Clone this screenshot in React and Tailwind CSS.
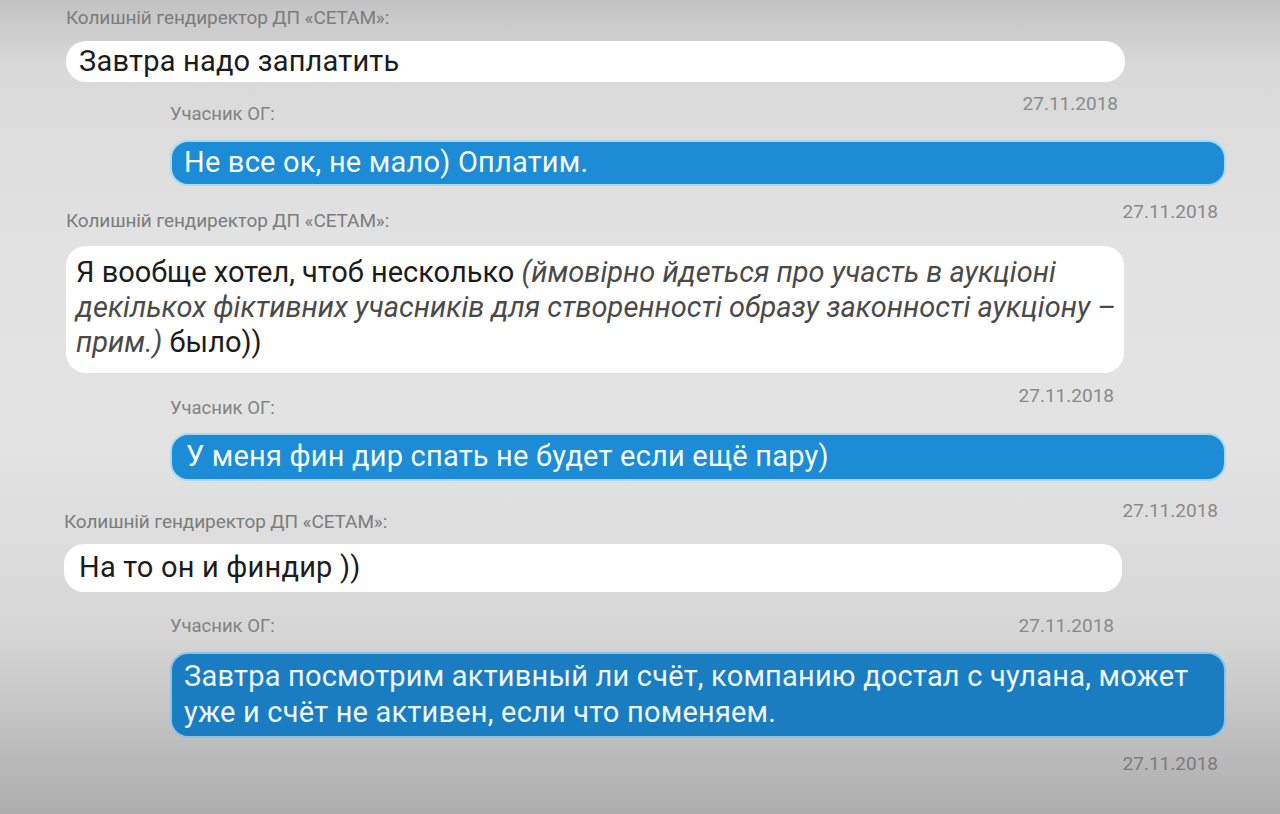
import React from "react";

const font = { fontFamily: "Roboto, 'Noto Sans', sans-serif" };

export default function App() {
  return (
    <div
      className="w-[1280px] h-[814px] overflow-hidden bg-[linear-gradient(to_bottom,#c2c2c2_0%,#d9d9d9_8%,#e2e2e2_30%,#e3e3e3_55%,#d6d6d6_78%,#adadad_100%)]"
      style={font}
    >
      <div className="flex flex-col pt-[7px]">
        {/* header 1 */}
        <div className="ml-[66px] h-[22px] leading-[22px] text-[19px] text-[#7c7c7c] tracking-[-0.1px]">
          Колишній гендиректор ДП «СЕТАМ»:
        </div>
        {/* bubble 1 */}
        <div className="ml-[66px] mt-[12px] w-[1059px] h-[41px] rounded-[20px] bg-white pl-[13px] flex items-center text-[29px] text-[#1c1c1c] tracking-[0.2px]">
          Завтра надо заплатить
        </div>
        {/* row 2 */}
        <div className="ml-[170px] w-[948px] h-[58px] flex justify-between items-start">
          <span className="mt-[21px] leading-[22px] text-[18.5px] text-[#828282]">Учасник ОГ:</span>
          <span className="mt-[11px] leading-[22px] text-[19px] text-[#8a8a8a]">27.11.2018</span>
        </div>
        {/* bubble 2 */}
        <div className="ml-[170px] w-[1056px] h-[46px] rounded-[18px] bg-[#1b8cd5] border-2 border-[#a8daf3] pl-[12px] flex items-center text-[29px] text-[#f4faff] tracking-[0.2px]">
          Не все ок, не мало) Оплатим.
        </div>
        {/* row 3 */}
        <div className="ml-[66px] w-[1152px] h-[60px] flex justify-between items-start">
          <span className="mt-[24px] leading-[22px] text-[19px] text-[#7c7c7c] tracking-[-0.1px]">
            Колишній гендиректор ДП «СЕТАМ»:
          </span>
          <span className="mt-[15px] leading-[22px] text-[19px] text-[#8a8a8a]">27.11.2018</span>
        </div>
        {/* bubble 3 */}
        <div className="ml-[66px] w-[1058px] h-[127px] rounded-[20px] bg-white pl-[10px] pr-[4px] py-[9px] text-[29px] leading-[35px] text-[#1c1c1c] tracking-[0px]">
          Я вообще хотел, чтоб несколько{" "}
          <i className="text-[#4a4a4a]">
            (ймовірно йдеться про участь в аукціоні декількох фіктивних учасників для створенності образу законності аукціону – прим.)
          </i>{" "}
          было))
        </div>
        {/* row 4 */}
        <div className="ml-[170px] w-[944px] h-[60px] flex justify-between items-start">
          <span className="mt-[24px] leading-[22px] text-[18.5px] text-[#828282]">Учасник ОГ:</span>
          <span className="mt-[12px] leading-[22px] text-[19px] text-[#8a8a8a]">27.11.2018</span>
        </div>
        {/* bubble 4 */}
        <div className="ml-[170px] w-[1056px] h-[48px] rounded-[18px] bg-[#1b8cd5] border-2 border-[#a8daf3] pl-[14px] flex items-center text-[29px] text-[#f4faff] tracking-[0.2px]">
          У меня фин дир спать не будет если ещё пару)
        </div>
        {/* row 5 */}
        <div className="ml-[64px] w-[1154px] h-[63px] flex justify-between items-start">
          <span className="mt-[30px] leading-[22px] text-[19px] text-[#7c7c7c] tracking-[-0.1px]">
            Колишній гендиректор ДП «СЕТАМ»:
          </span>
          <span className="mt-[19px] leading-[22px] text-[19px] text-[#8a8a8a]">27.11.2018</span>
        </div>
        {/* bubble 5 */}
        <div className="ml-[64px] w-[1058px] h-[48px] rounded-[20px] bg-white pl-[15px] flex items-center text-[29px] text-[#1c1c1c] tracking-[0.2px]">
          На то он и финдир ))
        </div>
        {/* row 6 */}
        <div className="ml-[170px] w-[944px] h-[60px] flex justify-between items-start">
          <span className="mt-[23px] leading-[22px] text-[18.5px] text-[#828282]">Учасник ОГ:</span>
          <span className="mt-[23px] leading-[22px] text-[19px] text-[#8a8a8a]">27.11.2018</span>
        </div>
        {/* bubble 6 */}
        <div className="ml-[170px] w-[1056px] h-[86px] rounded-[18px] bg-[#1a7dc2] border-2 border-[#8cc4e6] pl-[12px] pr-[10px] py-[4px] text-[29px] leading-[36px] text-[#eef6fc] tracking-[0.2px]">
          Завтра посмотрим активный ли счёт, компанию достал с чулана, может уже и счёт не активен, если что поменяем.
        </div>
        {/* row 7 */}
        <div className="ml-[170px] w-[1048px] flex justify-end">
          <span className="mt-[15px] leading-[22px] text-[19px] text-[#7c7c7c]">27.11.2018</span>
        </div>
      </div>
    </div>
  );
}
